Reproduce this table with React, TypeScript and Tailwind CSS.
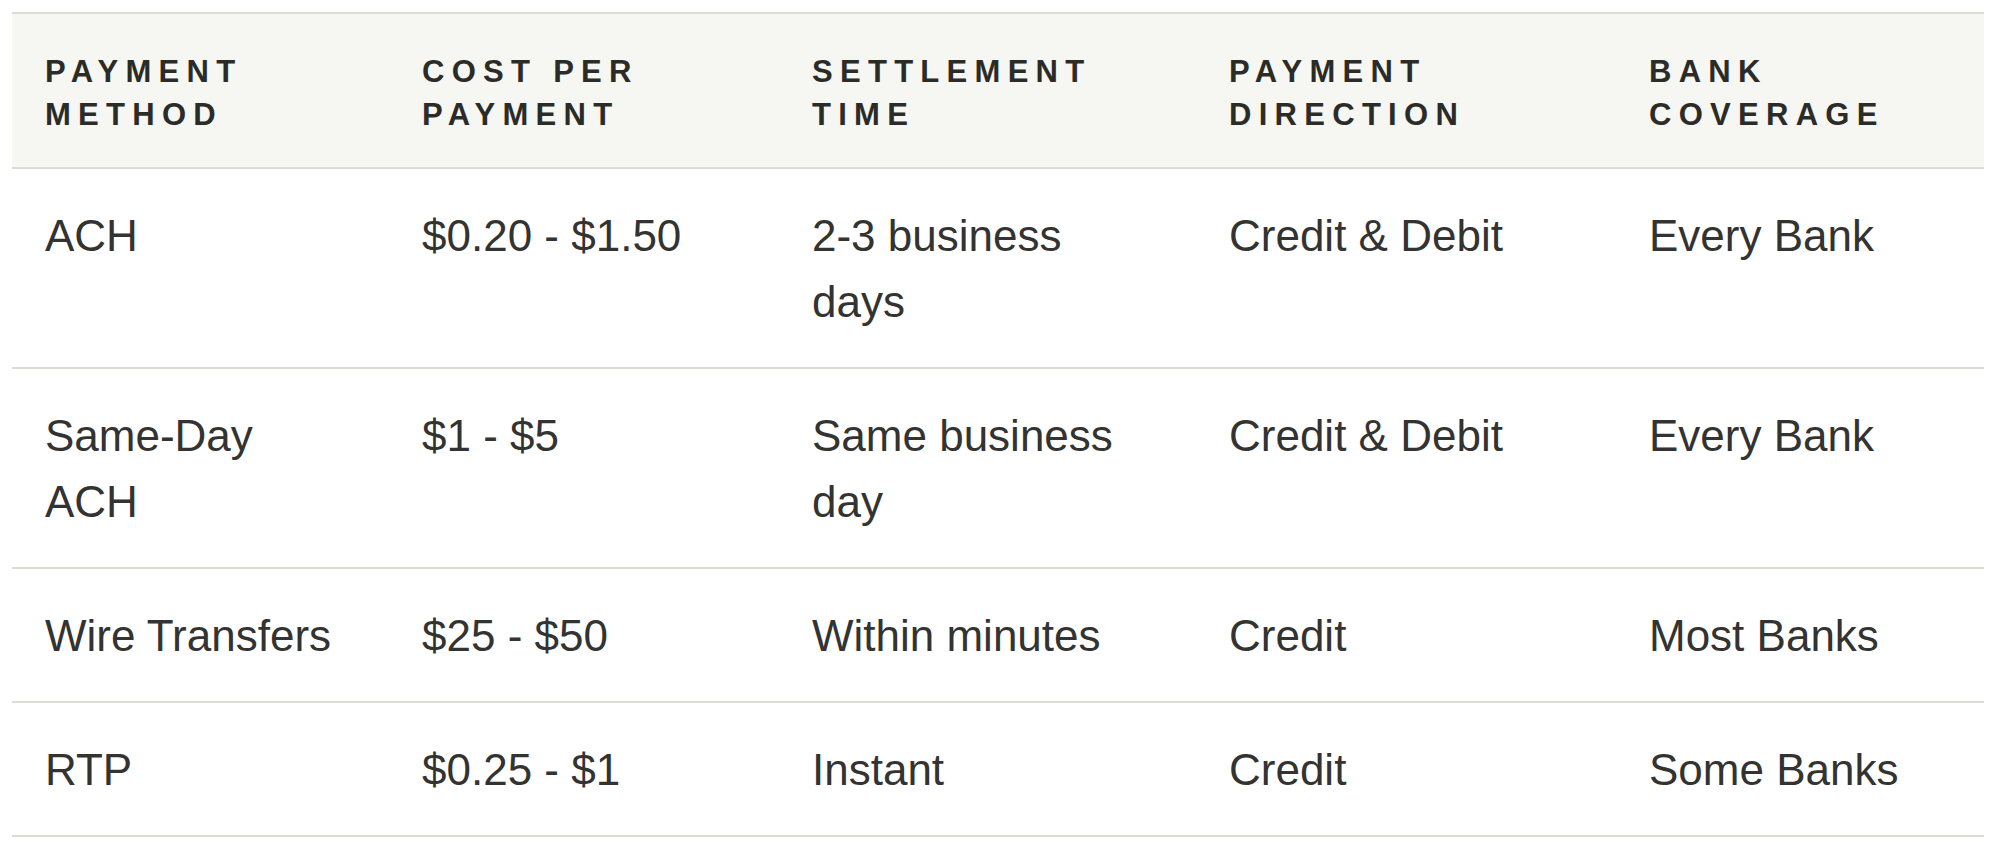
import React from 'react';

const headers = [
  ['Payment', 'Method'],
  ['Cost per', 'Payment'],
  ['Settlement', 'Time'],
  ['Payment', 'Direction'],
  ['Bank', 'Coverage'],
];

const rows = [
  ['ACH', '$0.20 - $1.50', '2-3 business days', 'Credit & Debit', 'Every Bank'],
  ['Same-Day ACH', '$1 - $5', 'Same business day', 'Credit & Debit', 'Every Bank'],
  ['Wire Transfers', '$25 - $50', 'Within minutes', 'Credit', 'Most Banks'],
  ['RTP', '$0.25 - $1', 'Instant', 'Credit', 'Some Banks'],
];

const widths = ['w-[377px]', 'w-[390px]', 'w-[417px]', 'w-[420px]', 'w-[368px]'];

const App = () => {
  return (
    <div className="min-h-screen bg-white pt-[12px] pl-[12px]" style={{ fontFamily: '"Liberation Sans", Arial, sans-serif' }}>
      <table className="w-[1972px] table-fixed border-collapse">
        <colgroup>
          {widths.map((w, i) => (
            <col key={i} className={w} />
          ))}
        </colgroup>
        <thead>
          <tr className="bg-[#f6f6f2]">
            {headers.map((h, i) => (
              <th
                key={i}
                className="border-t-2 border-b-2 border-[#dcdcd5] px-[33px] pt-[36px] pb-[31px] text-left align-top text-[31px] leading-[43px] font-bold uppercase tracking-[0.235em] text-[#2b2b28]"
              >
                {h[0]}
                <br />
                {h[1]}
              </th>
            ))}
          </tr>
        </thead>
        <tbody>
          {rows.map((r, i) => (
            <tr key={i}>
              {r.map((c, j) => (
                <td
                  key={j}
                  className="border-b-2 border-[#dcdcd5] px-[33px] pt-[34px] pb-[32px] align-top text-[44px] leading-[66px] text-[#333331]"
                >
                  <div className={j === 0 ? 'max-w-[290px]' : ''}>{c}</div>
                </td>
              ))}
            </tr>
          ))}
        </tbody>
      </table>
    </div>
  );
};

export default App;
